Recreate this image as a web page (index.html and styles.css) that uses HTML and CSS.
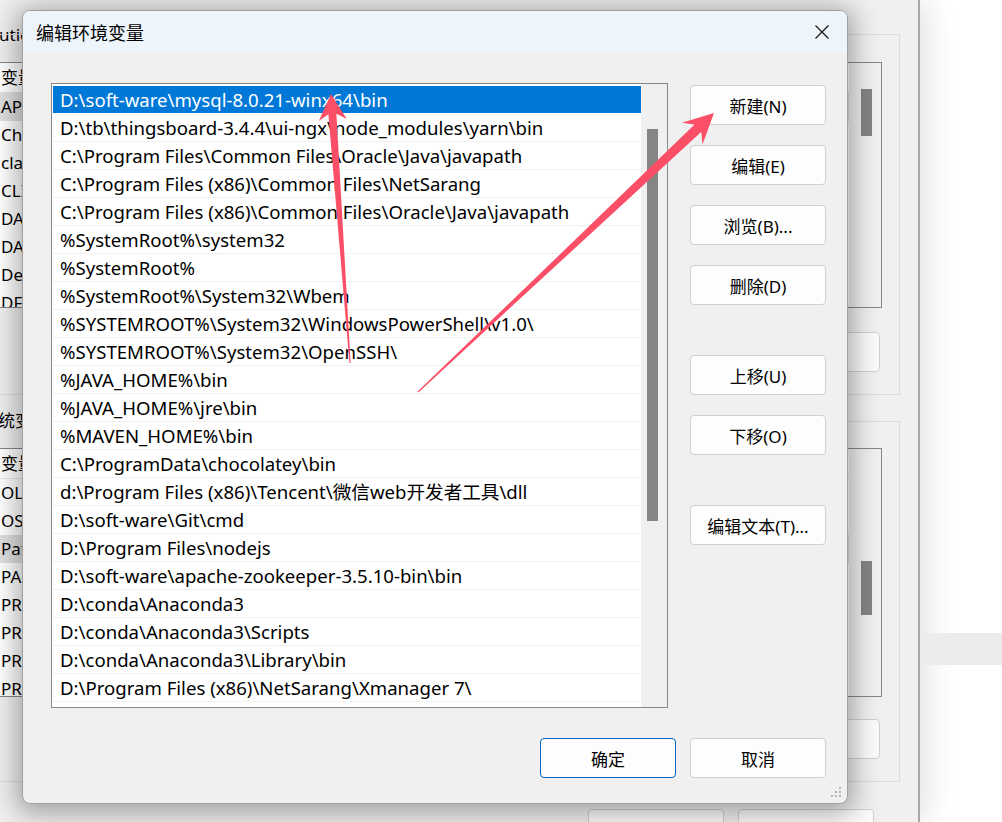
FILE: index.html
```html
<!DOCTYPE html>
<html lang="zh-CN">
<head>
  <meta charset="UTF-8">
  <title>编辑环境变量</title>
  <link rel="stylesheet" href="styles.css">
</head>
<body>
  <!-- window behind the dialog, only its edges show -->
  <div class="bgwin">
    <div class="bg-caption">utio</div>
    <div class="group">
      <div class="bg-list">
        <div class="bg-row bg-head">变量</div>
        <div class="bg-row bg-sel">AP</div>
        <div class="bg-row">Ch</div>
        <div class="bg-row">cla</div>
        <div class="bg-row">CLI</div>
        <div class="bg-row">DA</div>
        <div class="bg-row">DA</div>
        <div class="bg-row">De</div>
        <div class="bg-row">DF</div>
        <div class="bg-scroll"><div class="bg-thumb"></div></div>
      </div>
      <div class="bg-btn"></div>
    </div>
    <div class="group group2">
      <div class="group-label">统变</div>
      <div class="bg-list bg-list2">
        <div class="bg-row bg-head">变量</div>
        <div class="bg-row">OL</div>
        <div class="bg-row">OS</div>
        <div class="bg-row bg-sel">Pat</div>
        <div class="bg-row">PA</div>
        <div class="bg-row">PR</div>
        <div class="bg-row">PR</div>
        <div class="bg-row">PR</div>
        <div class="bg-row">PR</div>
        <div class="bg-scroll"><div class="bg-thumb bg-thumb2"></div></div>
      </div>
      <div class="bg-btn bg-btn2"></div>
    </div>
    <div class="bg-footer">
      <div class="bg-fbtn"></div>
      <div class="bg-fbtn"></div>
    </div>
  </div>
  <div class="side-band"></div>

  <!-- dialog -->
  <div class="dialog">
    <div class="titlebar">
      <span class="title">编辑环境变量</span>
      <svg class="close" width="16" height="16" viewBox="0 0 16 16">
        <path d="M1.5 1.5 L14.5 14.5 M14.5 1.5 L1.5 14.5" stroke="#1a1a1a" stroke-width="1.3" fill="none"/>
      </svg>
    </div>
    <div class="dlg-body">
      <div class="listbox">
        <div class="rows">
          <div class="row selected">D:\soft-ware\mysql-8.0.21-winx64\bin</div>
          <div class="row">D:\tb\thingsboard-3.4.4\ui-ngx\node_modules\yarn\bin</div>
          <div class="row">C:\Program Files\Common Files\Oracle\Java\javapath</div>
          <div class="row">C:\Program Files (x86)\Common Files\NetSarang</div>
          <div class="row">C:\Program Files (x86)\Common Files\Oracle\Java\javapath</div>
          <div class="row">%SystemRoot%\system32</div>
          <div class="row">%SystemRoot%</div>
          <div class="row">%SystemRoot%\System32\Wbem</div>
          <div class="row">%SYSTEMROOT%\System32\WindowsPowerShell\v1.0\</div>
          <div class="row">%SYSTEMROOT%\System32\OpenSSH\</div>
          <div class="row">%JAVA_HOME%\bin</div>
          <div class="row">%JAVA_HOME%\jre\bin</div>
          <div class="row">%MAVEN_HOME%\bin</div>
          <div class="row">C:\ProgramData\chocolatey\bin</div>
          <div class="row">d:\Program Files (x86)\Tencent\微信web开发者工具\dll</div>
          <div class="row">D:\soft-ware\Git\cmd</div>
          <div class="row">D:\Program Files\nodejs</div>
          <div class="row">D:\soft-ware\apache-zookeeper-3.5.10-bin\bin</div>
          <div class="row">D:\conda\Anaconda3</div>
          <div class="row">D:\conda\Anaconda3\Scripts</div>
          <div class="row">D:\conda\Anaconda3\Library\bin</div>
          <div class="row">D:\Program Files (x86)\NetSarang\Xmanager 7\</div>
        </div>
        <div class="scrollbar"><div class="thumb"></div></div>
      </div>
      <div class="actions">
        <button class="btn">新建(N)</button>
        <button class="btn">编辑(E)</button>
        <button class="btn">浏览(B)...</button>
        <button class="btn">删除(D)</button>
        <button class="btn gap">上移(U)</button>
        <button class="btn">下移(O)</button>
        <button class="btn gap">编辑文本(T)...</button>
      </div>
    </div>
    <div class="dlg-footer">
      <button class="btn default">确定</button>
      <button class="btn">取消</button>
    </div>
    <svg class="grip" width="12" height="12" viewBox="0 0 12 12">
      <rect x="8" y="0" width="2" height="2" fill="#b5b5b5"/>
      <rect x="4" y="4" width="2" height="2" fill="#b5b5b5"/>
      <rect x="8" y="4" width="2" height="2" fill="#b5b5b5"/>
      <rect x="0" y="8" width="2" height="2" fill="#b5b5b5"/>
      <rect x="4" y="8" width="2" height="2" fill="#b5b5b5"/>
      <rect x="8" y="8" width="2" height="2" fill="#b5b5b5"/>
    </svg>
  </div>

  <!-- annotation arrows -->
  <svg class="arrows" width="1002" height="822" viewBox="0 0 1002 822">
    <polygon fill="#fb4f67" points="331,94 346.8,118.9 336.4,113.7 350.6,363 349.4,363 328.4,114.3 318.8,120.9"/>
    <polygon fill="#fb4f67" points="714,113 702.5,144.5 701.4,131.7 418.4,392.4 417.6,391.6 694.6,124.5 681.9,122.7"/>
  </svg>
</body>
</html>
```

FILE: styles.css
```css
body {
  margin: 0;
  width: 1002px;
  height: 822px;
  overflow: hidden;
  position: relative;
  background: #ffffff;
  font-family: "Noto Sans", "Noto Sans CJK SC", sans-serif;
  font-size: 17px;
  color: #000;
}

/* background window */
.bgwin {
  position: absolute;
  left: 0;
  top: 0;
  width: 918px;
  height: 822px;
  background: #f0f0f0;
  border-right: 2px solid #a8a8a8;
  box-shadow: 6px 0 30px rgba(0, 0, 0, 0.12);
  overflow: hidden;
}

.bg-caption {
  height: 34px;
  line-height: 70px;
  margin-left: -1px;
  margin-top: -17px;
  padding-top: 17px;
}

.group {
  height: 361px;
  margin-left: -40px;
  margin-right: 18px;
  border: 1px solid #dcdcdc;
  box-sizing: border-box;
  position: relative;
  display: flex;
  flex-direction: column;
  align-items: flex-end;
}

.group2 {
  margin-top: 26px;
}

.group-label {
  position: absolute;
  left: 37px;
  top: -12px;
  background: #f0f0f0;
  line-height: 22px;
}

.bg-list {
  align-self: stretch;
  margin-top: 27px;
  margin-right: 17px;
  height: 246px;
  background: #fff;
  border-top: 1px solid #828790;
  border-right: 1px solid #828790;
  border-bottom: 1px solid #828790;
  box-sizing: border-box;
  position: relative;
  overflow: hidden;
}

.bg-list2 {
  margin-top: 26px;
  height: 249px;
}

.bg-row {
  height: 28px;
  line-height: 28px;
  padding-left: 40px;
  white-space: nowrap;
}

.bg-head {
  border-bottom: 1px solid #e5e5e5;
  height: 29px;
  line-height: 29px;
}

.bg-sel {
  background: #e0e0e0;
}

.bg-scroll {
  position: absolute;
  right: 0;
  top: 0;
  bottom: 0;
  width: 32px;
  background: #f0f0f0;
}

.bg-thumb {
  margin-top: 26px;
  margin-left: 12px;
  width: 11px;
  height: 47px;
  background: #858585;
}

.bg-thumb2 {
  margin-top: 112px;
  height: 54px;
}

.bg-btn {
  margin-top: 24px;
  margin-right: 19px;
  width: 140px;
  height: 40px;
  border: 1px solid #d0d0d0;
  border-radius: 4px;
  background: #fbfbfb;
  box-sizing: border-box;
}

.bg-btn2 {
  margin-top: 22px;
}

.bg-footer {
  display: flex;
  gap: 14px;
  margin-top: 27px;
  margin-left: 588px;
}

.bg-fbtn {
  width: 136px;
  height: 40px;
  border: 1px solid #d0d0d0;
  border-radius: 4px;
  background: #fbfbfb;
  box-sizing: border-box;
}

.side-band {
  position: absolute;
  left: 920px;
  top: 633px;
  width: 82px;
  height: 32px;
  background: #ececec;
}

/* dialog */
.dialog {
  position: absolute;
  left: 22px;
  top: 10px;
  width: 826px;
  height: 794px;
  box-sizing: border-box;
  background: #f0f0f0;
  border: 1px solid #a0a0a0;
  border-radius: 8px;
  box-shadow: 0 4px 26px 6px rgba(0, 0, 0, 0.32);
  overflow: hidden;
  display: flex;
  flex-direction: column;
}

.titlebar {
  height: 42px;
  flex-shrink: 0;
  background: #edf4fa;
  display: flex;
  align-items: center;
  justify-content: space-between;
  padding: 0 17px 0 13px;
}

.title {
  font-size: 18px;
}

.dlg-body {
  display: flex;
  gap: 22px;
  padding: 30px 0 0 28px;
}

.listbox {
  width: 617px;
  height: 625px;
  box-sizing: border-box;
  border: 1px solid #828790;
  background: #fff;
  display: flex;
  padding: 2px 0 0 1px;
}

.rows {
  width: 588px;
}

.row {
  height: 28px;
  line-height: 27px;
  box-sizing: border-box;
  border-bottom: 1px solid #f0f0f0;
  padding-left: 7px;
  font-size: 18.6px;
  white-space: nowrap;
  overflow: hidden;
}

.row.selected {
  background: #0078d7;
  color: #fff;
  border-bottom-color: #fff;
}

.scrollbar {
  flex: 1;
  background: #f0f0f0;
  margin-top: -2px;
}

.thumb {
  margin: 45px 0 0 6px;
  width: 11px;
  height: 392px;
  background: #858585;
}

.actions {
  display: flex;
  flex-direction: column;
  gap: 20px;
  padding-top: 2px;
}

.btn {
  width: 136px;
  height: 40px;
  box-sizing: border-box;
  border: 1px solid #d0d0d0;
  border-radius: 4px;
  background: #fdfdfd;
  font-family: "Noto Sans", "Noto Sans CJK SC", sans-serif;
  font-size: 17px;
  color: #000;
  padding: 0;
}

.btn.gap {
  margin-top: 30px;
}

.dlg-footer {
  display: flex;
  justify-content: flex-end;
  gap: 14px;
  margin-top: auto;
  padding: 0 21px 25px 0;
}

.btn.default {
  border-color: #0067c0;
}

.grip {
  position: absolute;
  right: 4px;
  bottom: 4px;
}

.arrows {
  position: absolute;
  left: 0;
  top: 0;
  pointer-events: none;
}
```
